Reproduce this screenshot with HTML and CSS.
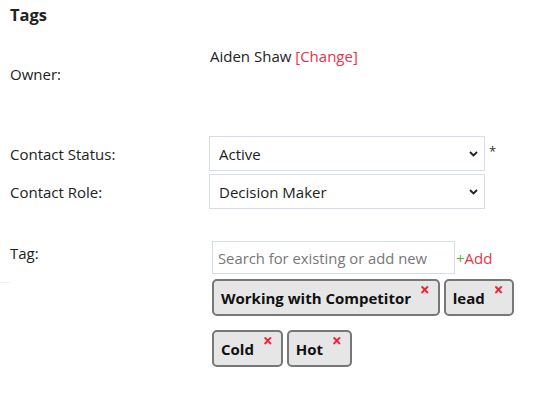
FILE: index.html
```html
<!DOCTYPE html>
<html>
<head>
<meta charset="utf-8">
<link rel="stylesheet" href="styles.css">
</head>
<body>
<div class="page">
  <h2 class="title">Tags</h2>
  <div class="form">
    <div class="row owner-row">
      <div class="label owner-label">Owner:</div>
      <div class="owner-field">Aiden Shaw <a class="change">[Change]</a></div>
    </div>
    <div class="row status-row">
      <div class="label">Contact Status:</div>
      <div class="field">
        <div class="select-wrap">
          <select class="select"><option>Active</option></select>
          <svg class="chev" width="9" height="6" viewBox="0 0 9 6"><path d="M1 1 L4.5 4.5 L8 1" fill="none" stroke="#222" stroke-width="1.8"/></svg>
        </div>
        <span class="req">*</span>
      </div>
    </div>
    <div class="row role-row">
      <div class="label">Contact Role:</div>
      <div class="field">
        <div class="select-wrap">
          <select class="select"><option>Decision Maker</option></select>
          <svg class="chev" width="9" height="6" viewBox="0 0 9 6"><path d="M1 1 L4.5 4.5 L8 1" fill="none" stroke="#222" stroke-width="1.8"/></svg>
        </div>
      </div>
    </div>
    <div class="row tag-row">
      <div class="label tag-label">Tag:</div>
      <div class="field tag-field">
        <div class="search-line">
          <input class="search" type="text" placeholder="Search for existing or add new">
          <a class="add"><span class="plus">+</span>Add</a>
        </div>
        <div class="chips">
          <span class="chip">Working with Competitor<span class="x">×</span></span>
          <span class="chip">lead<span class="x">×</span></span>
        </div>
        <div class="chips">
          <span class="chip">Cold<span class="x">×</span></span>
          <span class="chip">Hot<span class="x">×</span></span>
        </div>
      </div>
    </div>
  </div>
  <div class="edge"></div>
</div>
</body>
</html>
```

FILE: styles.css
```css
* { box-sizing: border-box; }
html, body { margin: 0; padding: 0; background: #fff; }
body {
  font-family: "Open Sans", "Noto Sans", "DejaVu Sans", sans-serif;
  font-size: 15px;
  color: #222;
}
.page { position: relative; padding: 4px 0 0 10px; width: 542px; height: 395px; }
.title {
  margin: 0;
  font-size: 16.5px;
  font-weight: 700;
  line-height: 22px;
}
.form { display: flex; flex-direction: column; }
.row { display: flex; }
.label { width: 199px; flex: none; line-height: 20px; }
.field { display: flex; align-items: center; line-height: 20px; }
.owner-row { margin-top: 20px; height: 86px; }
.owner-label { padding-top: 18px; }
.owner-field { padding-left: 1px; line-height: 20px; }
.change { color: #e8334a; }
.status-row, .role-row { align-items: center; }
.status-row { margin-top: 4px; }
.role-row { margin-top: 3px; }
.select-wrap { position: relative; width: 276px; height: 35px; }
.select {
  appearance: none;
  -webkit-appearance: none;
  width: 100%;
  height: 100%;
  border: 1px solid #d6dcea;
  border-radius: 0;
  background: #fff;
  font-family: inherit;
  font-size: 15px;
  color: #222;
  padding: 0 0 0 9px;
}
.chev { position: absolute; right: 7px; top: 15px; }
.req { margin-left: 4px; margin-top: -6px; font-size: 13px; color: #333; }
.tag-row { margin-top: 32px; align-items: flex-start; }
.tag-label { padding-top: 2px; }
.tag-field { flex-direction: column; align-items: flex-start; padding-left: 3px; }
.search-line { display: flex; align-items: center; }
.search {
  width: 243px;
  height: 33px;
  border: 1px solid #d4dcee;
  border-radius: 0;
  padding: 0 0 0 5px;
  font-family: inherit;
  font-size: 14.8px;
  color: #222;
  outline: none;
}
.search::placeholder { color: #777; }
.add { color: #e8334a; font-size: 15px; margin-left: 1px; }
.plus { color: #55b82e; }
.chips { display: flex; gap: 4px; margin-top: 5px; }
.chips + .chips { margin-top: 14px; }
.chip {
  display: flex;
  align-items: center;
  height: 37px;
  padding: 0 8px 0 7px;
  background: #e6e6e6;
  border: 2px solid #777;
  border-radius: 5px;
  font-weight: 700;
  font-size: 15px;
  color: #111;
}
.x {
  color: #e8233b;
  font-size: 17px;
  font-weight: 700;
  align-self: flex-start;
  margin-top: 0;
  margin-left: 9px;
  line-height: 18px;
}
.edge { position: absolute; left: 0; top: 282px; width: 10px; height: 1px; background: #eef0f4; }
```
